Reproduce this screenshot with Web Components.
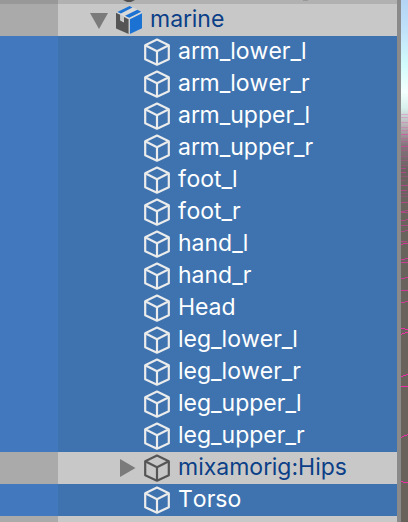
<!DOCTYPE html>
<html lang="en">
<head>
<meta charset="utf-8">
<title>Hierarchy</title>
<style>
html, body { margin: 0; height: 100%; }
body { font-family: Inter, "Liberation Sans", sans-serif; font-size: 23px; font-kerning: none; line-height: 32px; background: #c8c8c8; }
</style>
</head>
<body>
<editor-window>
  <hierarchy-tree>
    <clipped-row></clipped-row>
    <tree-node label="marine" kind="prefab" toggle="open" depth="0"></tree-node>
    <tree-node label="arm_lower_l" selected depth="1"></tree-node>
    <tree-node label="arm_lower_r" selected depth="1"></tree-node>
    <tree-node label="arm_upper_l" selected depth="1"></tree-node>
    <tree-node label="arm_upper_r" selected depth="1"></tree-node>
    <tree-node label="foot_l" selected depth="1"></tree-node>
    <tree-node label="foot_r" selected depth="1"></tree-node>
    <tree-node label="hand_l" selected depth="1"></tree-node>
    <tree-node label="hand_r" selected depth="1"></tree-node>
    <tree-node label="Head" selected depth="1"></tree-node>
    <tree-node label="leg_lower_l" selected depth="1"></tree-node>
    <tree-node label="leg_lower_r" selected depth="1"></tree-node>
    <tree-node label="leg_upper_l" selected depth="1"></tree-node>
    <tree-node label="leg_upper_r" selected depth="1"></tree-node>
    <tree-node label="mixamorig:Hips" toggle="closed" depth="1"></tree-node>
    <tree-node label="Torso" selected depth="1"></tree-node>
  </hierarchy-tree>
  <scene-view slot="scene"></scene-view>
</editor-window>
<script>
class EditorWindow extends HTMLElement {
  constructor() {
    super();
    this.attachShadow({ mode: 'open' }).innerHTML = `
      <style>
        :host { display: grid; grid-template-columns: minmax(0, 1fr) 4px 7px; min-height: 100%; overflow: hidden; }
        .divider { background: #8a8a8a; }
      </style>
      <slot></slot><div class="divider"></div><slot name="scene"></slot>`;
  }
}

class HierarchyTree extends HTMLElement {
  constructor() {
    super();
    this.attachShadow({ mode: 'open' }).innerHTML = `
      <style>
        :host { display: flex; flex-direction: column; background: linear-gradient(90deg, #aaaaaa 58px, #c8c8c8 58px); }
      </style>
      <slot></slot>`;
    this.setAttribute('role', 'tree');
    this.setAttribute('aria-label', 'Hierarchy');
  }
}

/* Lower edge of the row that is scrolled out of view. */
class ClippedRow extends HTMLElement {
  constructor() {
    super();
    this.attachShadow({ mode: 'open' }).innerHTML = `
      <style>
        :host { display: flex; height: 4px; background: linear-gradient(90deg, #989898 58px, #b1b1b1 58px); }
        svg { display: block; }
      </style>
      <svg width="320" height="4" aria-hidden="true">
        <path d="M123 0h12l-4 2h-4z" fill="#505050"/><path d="M303 0h5v1h-5z" fill="#999"/>
      </svg>`;
  }
}

const ICONS = {
  cube: `<svg width="26" height="28" viewBox="0 0 26 28" fill="none" stroke="currentColor" stroke-width="2.2" stroke-linejoin="round" aria-hidden="true">
    <path d="M13 1.6 24.8 7.2v14L13 26.7 1.2 21.2v-14z"/><path d="M1.2 7.2 13 13.2 24.8 7.2M13 13.2v13.4"/></svg>`,
  prefab: `<svg width="26" height="28" viewBox="0 0 26 28" aria-hidden="true">
    <path fill="#d9d9d9" d="M0 6.800 13.800 0 26 5.800V22.200L13 28 0 22.200z"/>
    <path fill="#555" d="M0 6.800 4.200 8.800V14.600L8 16.400V11L12.600 13.200V28L0 22.500z"/>
    <path fill="#c8c8c8" d="M4.700 8.900 8 10.500V15.600L4.700 14z"/>
    <path fill="#1b72d2" d="M13.900 13.300 26 7.300V22.300L13.900 28z"/>
    <path fill="#1b72d2" d="M1.300 5.900 13.600 0 16.500 1.500 4.900 7.500z"/>
    <path fill="#1b72d2" d="M9 9.700 21.400 3.700 25.300 5.700 13.200 11.800z"/></svg>`
};

class TreeNode extends HTMLElement {
  connectedCallback() {
    if (this.shadowRoot) return;
    const toggle = this.getAttribute('toggle');
    const label = this.getAttribute('label');
    this.setAttribute('role', 'treeitem');
    this.setAttribute('aria-selected', String(this.hasAttribute('selected')));
    this.attachShadow({ mode: 'open' }).innerHTML = `
      <style>
        :host { display: grid; grid-template-columns: 58px minmax(0, 1fr); height: 32px; color: #0b3f87; --icon: #555; --gutter: #aaaaaa; --row: #c8c8c8; }
        :host([selected]) { color: #fff; --icon: #ececec; --gutter: #4178be; --row: #3e73af; }
        .gutter { background: var(--gutter); }
        .row { display: flex; align-items: center; background: var(--row); padding-left: 32px; }
        :host([depth="1"]) .row { padding-left: 60px; }
        .toggle { display: grid; place-items: center; width: 18px; height: 32px; padding: 0; border: 0; background: none; color: #7b7b7b; margin-right: 8px; }
        .icon { color: var(--icon); display: flex; margin-right: 8px; }
        svg { display: block; }
        .label { white-space: nowrap; padding-bottom: 2px; line-height: 30px; }
      </style>
      <div class="gutter"></div>
      <div class="row">
        ${toggle
          ? `<button class="toggle" type="button" aria-label="Toggle ${label}"><svg width="18" height="18" aria-hidden="true">
              <path fill="currentColor" d="${toggle === 'open' ? 'M0 2H18L9 18z' : 'M2 0 17.500 9 2 18z'}"/></svg></button>`
          : '<span class="toggle"></span>'}
        <span class="icon">${ICONS[this.getAttribute('kind') || 'cube']}</span>
        <span class="label">${label}</span>
      </div>`;
  }
}

class SceneView extends HTMLElement {
  constructor() {
    super();
    this.attachShadow({ mode: 'open' }).innerHTML = `
      <style>
        :host { display: block; overflow: hidden; background: linear-gradient(#b4d3f4 0, #c0e2fa 30px, #d2fcfc 65px, #f4fffe 92px, #d8f0ec 108px, #b9b4b8 125px, #85747c 145px, #6c6262 170px, #69635d 210px, #69625b); }
        svg { display: block; }
      </style>
      <svg width="7" height="522" fill="none" stroke="#ee2fa8" aria-hidden="true">
        <path stroke-opacity=".25" d="M0 114.500h7M0 117.500h7M0 122.500h7M0 127.500h7M0 130.500h7M0 138.500h7M0 141.500h7M0 150.500h7M0 156.500h7M0 160.500h7M0 165.500h7M0 176.500h7M0 180.500h4M0 193.500h7M0 196.500h7"/>
        <path stroke-opacity=".5" d="M0 134.500h7M0 146.500h7M0 168.500h5M0 172.500h5M0 185.500h7M0 190.500h6M0 202.500h7M0 211.500h4M4 210.500h3M0 212.500h7M0 220.500h5M5 219.500h2M0 225.500h7M0 231.500h4M4 230.500h3M0 241.500h6"/>
        <path stroke-opacity=".75" d="M0 244.500h2M2 243.500h5M0 259.500h4M4 258.500h3M0 262.500h7M0 278.500h4M4 277.500h3M0 290.500h7M0 302.500h4M4 301.500h3"/>
        <path d="M0 328.500h4M4 329.500h3M0 334.500h1M1 333.500h3M4 332.500h3M0 376.500h2M2 375.500h3M5 374.500h2M0 386.500h7M0 437.500h1M1 436.500h2M3 435.500h3M6 434.500h1M0 481.500h2M2 482.500h5"/>
      </svg>`;
  }
}

customElements.define('editor-window', EditorWindow);
customElements.define('hierarchy-tree', HierarchyTree);
customElements.define('clipped-row', ClippedRow);
customElements.define('tree-node', TreeNode);
customElements.define('scene-view', SceneView);
</script>
</body>
</html>
